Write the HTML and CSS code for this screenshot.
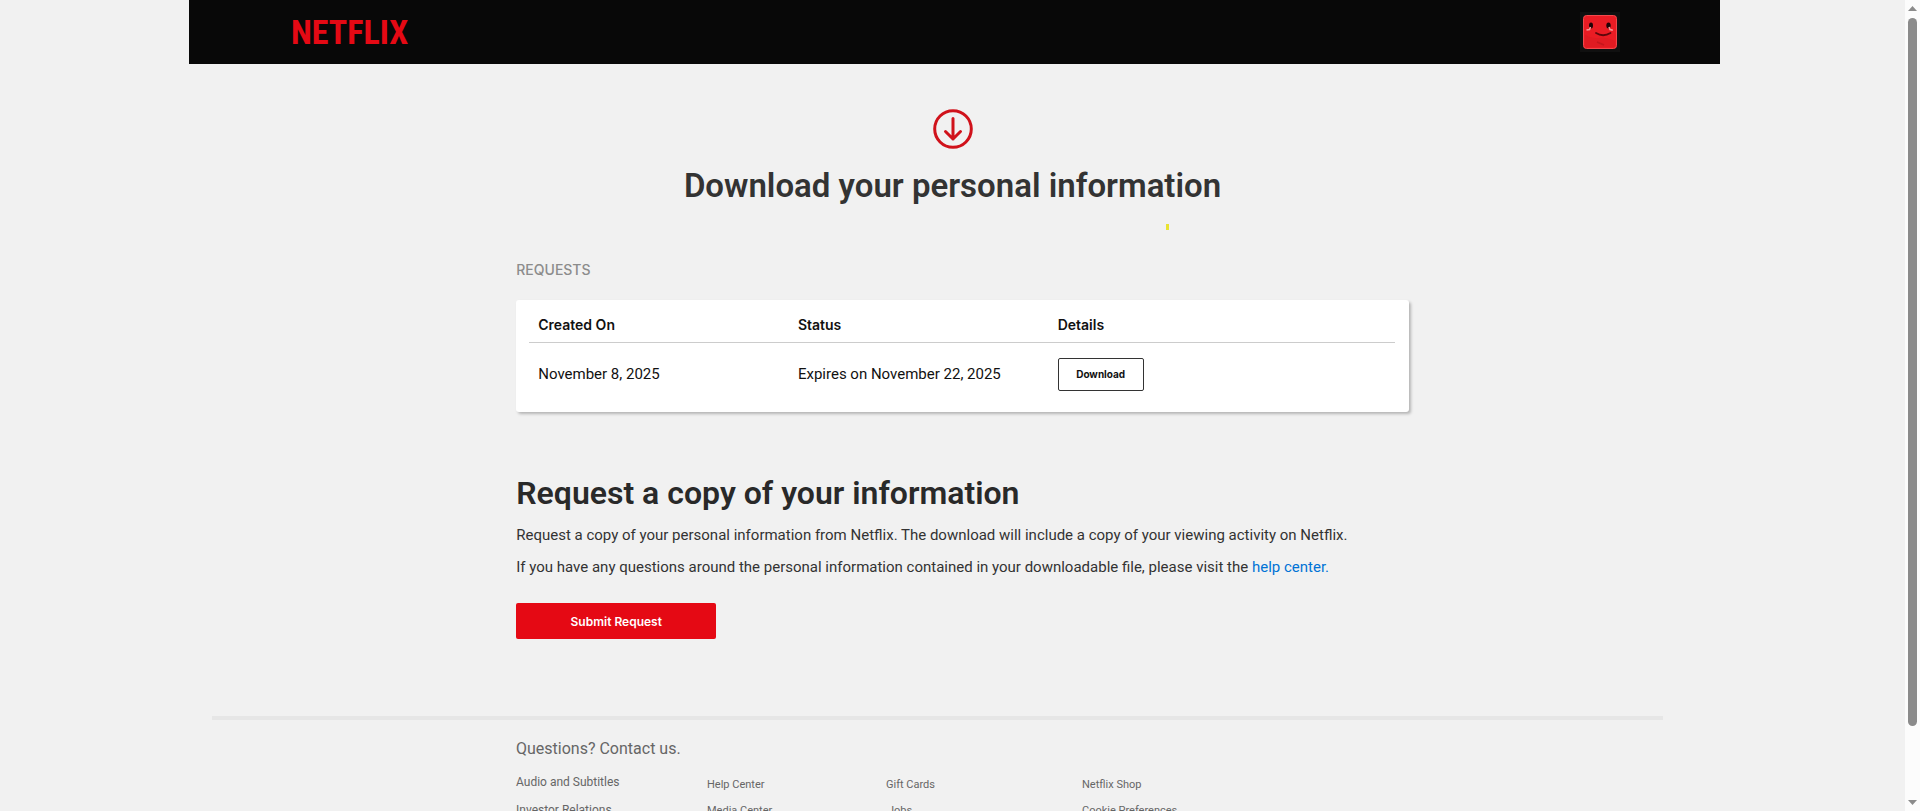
FILE: index.html
```html
<!DOCTYPE html>
<html lang="en">
<head>
<meta charset="utf-8">
<title>Download your personal information</title>
<link rel="stylesheet" href="styles.css">
</head>
<body>
<div class="page">
  <header class="topbar">
    <a class="logo" href="#">NETFLIX</a>
    <a class="profile" href="#" aria-label="Account">
      <svg class="avatar" viewBox="0 0 34 34" aria-hidden="true">
        <rect x=".5" y=".5" width="33" height="33" rx="3" fill="#ea1c24" stroke="#f4484c"/>
        <path d="M2 20Q9 24 16 23T32 26V32H2Z" fill="#d81a20" opacity=".5"/>
        <path d="M14 27l7 3" stroke="#b3151a" stroke-width="1.500" opacity=".6"/>
        <ellipse cx="8" cy="10.500" rx="2" ry="3" fill="#1f0406"/>
        <ellipse cx="25.500" cy="10.500" rx="2.200" ry="3" fill="#1f0406"/>
        <path d="M3.500 15l3-.5 1-2.500M26 12l1 2.500 2.800.8" fill="none" stroke="#f79a98" stroke-width="1.600"/>
        <path d="M13 18Q20 22.500 27.500 18" fill="none" stroke="#5d080c" stroke-width="1.800" stroke-linecap="round"/>
      </svg>
    </a>
  </header>

  <section class="hero">
    <svg class="hero-icon" viewBox="0 0 40 40" aria-hidden="true">
      <circle cx="20" cy="20" r="18.300"/>
      <path d="M20 9.500V30M12.500 22.500L20 30l7.500-7.500"/>
    </svg>
    <h1>Download your personal information</h1>
    <span class="marker"></span>
  </section>

  <main class="content">
    <h2 class="section-label">REQUESTS</h2>
    <div class="card">
      <table class="requests">
        <thead><tr><th>Created On</th><th>Status</th><th>Details</th></tr></thead>
        <tbody><tr><td>November 8, 2025</td><td>Expires on November 22, 2025</td><td><button class="download" type="button">Download</button></td></tr></tbody>
      </table>
    </div>
    <h2 class="copy-title">Request a copy of your information</h2>
    <p>Request a copy of your personal information from Netflix. The download will include a copy of your viewing activity on Netflix.</p>
    <p>If you have any questions around the personal information contained in your downloadable file, please visit the <a class="help" href="#">help center.</a></p>
    <button class="submit" type="button">Submit Request</button>
  </main>

  <footer class="footer">
    <a class="contact" href="#">Questions? Contact us.</a>
    <div class="links">
      <ul class="main-links"><li><a href="#">Audio and Subtitles</a></li><li><a href="#">Investor Relations</a></li></ul>
      <ul><li><a href="#">Help Center</a></li><li><a href="#">Media Center</a></li></ul>
      <ul><li><a href="#">Gift Cards</a></li><li class="jobs"><a href="#">Jobs</a></li></ul>
      <ul><li><a href="#">Netflix Shop</a></li><li><a href="#">Cookie Preferences</a></li></ul>
    </div>
  </footer>
</div>
<div class="scrollbar" aria-hidden="true">
  <svg viewBox="0 0 9 5"><path d="M0 5L4.500 0L9 5Z"/></svg>
  <div class="track"><div class="thumb"></div></div>
  <svg viewBox="0 0 9 5"><path d="M0 0L4.500 5L9 0Z"/></svg>
</div>
</body>
</html>
```
FILE: styles.css
```css
* { box-sizing: border-box; }
body {
  margin: 0;
  height: 100vh;
  display: flex;
  overflow: hidden;
  background: #f1f1f1;
  color: #333;
  font: 15px/20px Roboto, "Liberation Sans", sans-serif;
}
h1, h2, p, ul { margin: 0; padding: 0; }
ul { list-style: none; }
a { color: inherit; text-decoration: none; }
button { font-family: Inter, "Liberation Sans", sans-serif; cursor: pointer; }

.page { flex: 1; min-width: 0; overflow: hidden; }

.topbar {
  display: flex;
  align-items: center;
  justify-content: space-between;
  height: 64px;
  margin: 0 185px 0 189px;
  padding: 0 100px 0 102px;
  background: #080808;
}
.logo {
  color: #e50914;
  font: bold 34px/40px "Roboto Condensed", "Liberation Sans Narrow", "Open Sans Condensed", "DejaVu Sans Condensed", sans-serif;
}
.profile { display: flex; padding: 3px; background: #101010; }
.avatar { width: 34px; height: 34px; }

.hero {
  position: relative;
  display: flex;
  flex-direction: column;
  align-items: center;
  padding-top: 45px;
}
.hero-icon { width: 40px; height: 40px; fill: none; stroke: #d0121b; stroke-width: 3; stroke-linecap: round; stroke-linejoin: round; }
h1, .copy-title { font-weight: 600; line-height: 40px; }
h1 { margin-top: 17px; font-size: 33px; }
.marker { position: absolute; left: 61.2%; bottom: -24px; width: 3px; height: 6px; background: #e9e332; }

.content { margin: 0 26.04% 0 27.1%; padding-top: 54px; }
.section-label { color: #8c8c8c; font: 500 14px/20px Inter, "Liberation Sans", sans-serif; }
.card {
  margin-top: 20px;
  height: 112px;
  padding: 8px 14px 0 13px;
  background: #fff;
  border-radius: 3px;
  box-shadow: 2px 2px 3px rgba(0, 0, 0, .25);
}
.requests { width: 100%; border-collapse: collapse; table-layout: fixed; color: #111; }
.requests th, .requests td { padding: 0 0 0 9px; text-align: left; }
.requests th { width: 30%; height: 34px; font: 600 14px/20px Inter, "Liberation Sans", sans-serif; border-bottom: 1px solid #ccc; }
.requests th:last-child { width: 40%; }
.requests td { height: 64px; }
.download { display: block; width: 86px; height: 33px; padding: 0; background: #fff; border: 1px solid #333; border-radius: 2px; color: #111; font-size: 10px; font-weight: 700; }
.copy-title { margin-top: 61px; color: #292929; font-size: 32px; }
.content p { margin-top: 12px; white-space: nowrap; }
.help { color: #0073d6; }
.submit { display: block; width: 200px; height: 36px; margin-top: 26px; background: #e50914; border: 0; border-radius: 2px; color: #fff; font-size: 12px; font-weight: 600; }

.footer { margin: 77px 242px 0 212px; padding: 19px 0 0 304px; border-top: 4px solid #e6e6e6; color: #666; }
.contact { font-size: 16px; line-height: 20px; }
.links { display: grid; grid-template-columns: 191px 179px 196px 1fr; margin-top: 9px; font-size: 11px; line-height: 26px; }
.links ul { padding-top: 4px; }
.links .main-links { padding-top: 0; font-size: 12px; line-height: 28px; }
.links .jobs { padding-left: 2px; }

.scrollbar {
  display: flex;
  flex-direction: column;
  align-items: center;
  width: 15px;
  padding: 6px 0;
  background: #fcfcfc;
}
.scrollbar svg { width: 9px; height: 5px; fill: #8b8b8b; }
.track { flex: 1; padding-top: 7px; }
.thumb { width: 9px; height: 90.5%; border-radius: 5px; background: #8b8b8b; }
```
